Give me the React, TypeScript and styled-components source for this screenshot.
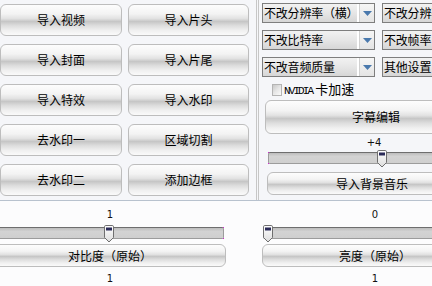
import React from "react";
import styled, { createGlobalStyle } from "styled-components";

const Global = createGlobalStyle`
  html, body { margin: 0; padding: 0; width: 432px; height: 286px; overflow: hidden; background: #fcfcfd; }
  body { font-family: "Noto Sans CJK SC", "Noto Sans", sans-serif; color: #000; }
  * { box-sizing: border-box; }
`;

const Page = styled.div`
  width: 520px;
  height: 286px;
  display: flex;
  flex-direction: column;
`;

const Top = styled.div`
  display: flex;
  height: 204px;
  background: #f5f6f9;
  border-bottom: 1px solid #b8c2ce;
`;

const LeftPanel = styled.div`
  width: 259px;
  border-right: 3px double #c6c6c6;
  display: grid;
  grid-template-columns: 122px 121px;
  grid-auto-rows: 32px;
  column-gap: 6px;
  row-gap: 8px;
  padding-top: 4px;
  align-content: start;
`;

const GlossButton = styled.div<{ $w?: number; $h?: number; $ml?: number; $mt?: number }>`
  ${(p) => (p.$w ? `width: ${p.$w}px;` : "")}
  ${(p) => (p.$h ? `height: ${p.$h}px;` : "")}
  ${(p) => (p.$ml ? `margin-left: ${p.$ml}px;` : "")}
  ${(p) => (p.$mt ? `margin-top: ${p.$mt}px;` : "")}
  flex-shrink: 0;
  display: flex;
  align-items: center;
  justify-content: center;
  border: 1px solid #bdbdbd;
  border-radius: 6px;
  background: linear-gradient(
    to bottom,
    #fdfdfd 0%,
    #f3f3f3 30%,
    #e2e2e2 45%,
    #c6c6c6 55%,
    #dcdcdc 68%,
    #f0f0f0 85%,
    #fafafa 100%
  );
  font-size: 12px;
  line-height: 1;
  color: #000;
  white-space: nowrap;
`;

const RightPanel = styled.div`
  flex: 1;
  display: flex;
  flex-direction: column;
  padding: 3px 0 0 3px;
`;

const SelectGrid = styled.div`
  display: grid;
  grid-template-columns: 113px 113px;
  grid-auto-rows: 20px;
  column-gap: 7px;
  row-gap: 7px;
`;

const Select = styled.div`
  display: flex;
  border: 1px solid #7e7e7e;
  background: #fff;
  overflow: hidden;
`;

const SelectText = styled.div`
  flex: 1;
  font-size: 12px;
  letter-spacing: -0.2px;
  line-height: 18px;
  padding-left: 1px;
  white-space: nowrap;
  overflow: hidden;
  background: linear-gradient(to bottom, #f2f2f2 0%, #e6e6e6 50%, #d6d6d6 100%);
`;

const ArrowBox = styled.div`
  width: 15px;
  margin-left: 2px;
  display: flex;
  align-items: center;
  justify-content: center;
  background: linear-gradient(to bottom, #f6f6f6, #e4e4e4);
  border-left: 1px solid #d0d0d0;
`;

const CheckRow = styled.div`
  display: flex;
  align-items: center;
  gap: 2px;
  margin: 6px 0 0 10px;
  height: 13px;
`;

const CheckBox = styled.div`
  width: 10px;
  height: 12px;
  border: 1px solid #b4b4b4;
  background: linear-gradient(135deg, #c8c8c8 0%, #e6e6e6 50%, #fafafa 100%);
`;

const CheckLabel = styled.div`
  font-size: 13px;
  line-height: 13px;
  white-space: nowrap;
`;

const Latin = styled.span`
  font-family: "Liberation Mono", monospace;
  font-size: 11px;
  font-weight: normal;
  letter-spacing: -1.9px;
  margin-right: 3px;
`;

const ValueLabel = styled.div<{ $w: number; $ml?: number; $mt?: number }>`
  width: ${(p) => p.$w}px;
  margin-left: ${(p) => p.$ml ?? 0}px;
  margin-top: ${(p) => p.$mt ?? 0}px;
  height: 14px;
  line-height: 14px;
  text-align: center;
  font-family: "DejaVu Sans", sans-serif;
  font-size: 10px;
  color: #111;
`;

const SliderBox = styled.div<{ $w: number; $ml?: number; $mt?: number }>`
  position: relative;
  width: ${(p) => p.$w}px;
  margin-left: ${(p) => p.$ml ?? 0}px;
  margin-top: ${(p) => p.$mt ?? 0}px;
  height: 18px;
  flex-shrink: 0;
`;

const Track = styled.div<{ $dot: "left" | "right" | "none" }>`
  position: absolute;
  left: 0;
  right: 0;
  top: 2px;
  height: 12px;
  border: 1px solid #9c9c9c;
  border-top-color: #6e6e6e;
  border-radius: 2px;
  background: linear-gradient(to bottom, #bdbdbd 0%, #d3d3d3 35%, #cfcfcf 100%);
  &::before,
  &::after {
    content: "";
    position: absolute;
    width: 1px;
    height: 1px;
    background: ${(p) => (p.$dot === "none" ? "transparent" : "#d020d0")};
    ${(p) => (p.$dot === "left" ? "left: -1px;" : "right: -1px;")}
  }
  &::before { top: -1px; }
  &::after { bottom: -1px; }
`;

const Thumb = styled.svg`
  position: absolute;
  top: 0;
  width: 10px;
  height: 18px;
`;

const Bottom = styled.div`
  display: flex;
  gap: 36px;
  margin-left: -6px;
  padding-top: 7px;
  background: #fcfcfd;
  flex: 1;
`;

const Column = styled.div<{ $w: number }>`
  width: ${(p) => p.$w}px;
  display: flex;
  flex-direction: column;
`;

const Arrow = () => (
  <svg width="9" height="5" viewBox="0 0 9 5">
    <path d="M0 0 H9 L4.5 5 Z" fill="#4a79ad" />
  </svg>
);

const Slider = ({
  w,
  ratio,
  ml,
  mt,
  dot,
}: {
  w: number;
  ratio: number;
  ml?: number;
  mt?: number;
  dot: "left" | "right" | "none";
}) => (
  <SliderBox $w={w} $ml={ml} $mt={mt}>
    <Track $dot={dot} />
    <Thumb viewBox="0 0 10 18" style={{ left: Math.round(ratio * (w - 10)) }}>
      <defs>
        <linearGradient id="tg" x1="0" x2="0" y1="0" y2="1">
          <stop offset="0" stopColor="#ffffff" />
          <stop offset="1" stopColor="#dcdcdc" />
        </linearGradient>
      </defs>
      <path
        d="M1.8 0.5 H8.2 A1.3 1.3 0 0 1 9.5 1.8 V12.5 L5 17 L0.5 12.5 V1.8 A1.3 1.3 0 0 1 1.8 0.5 Z"
        fill="url(#tg)"
        stroke="#6f6f6f"
      />
      <rect x="2" y="2.5" width="6" height="3" fill="#2a2a58" />
    </Thumb>
  </SliderBox>
);

const leftButtons = [
  "导入视频",
  "导入片头",
  "导入封面",
  "导入片尾",
  "导入特效",
  "导入水印",
  "去水印一",
  "区域切割",
  "去水印二",
  "添加边框",
];

const selects: { label: string; arrow: boolean }[] = [
  { label: "不改分辨率（横）", arrow: true },
  { label: "不改分辨率（竖）", arrow: true },
  { label: "不改比特率", arrow: true },
  { label: "不改帧率", arrow: true },
  { label: "不改音频质量", arrow: true },
  { label: "其他设置", arrow: true },
];

export default function App() {
  return (
    <>
      <Global />
      <Page>
        <Top>
          <LeftPanel>
            {leftButtons.map((t) => (
              <GlossButton key={t}>{t}</GlossButton>
            ))}
          </LeftPanel>
          <RightPanel>
            <SelectGrid>
              {selects.map((s) => (
                <Select key={s.label}>
                  <SelectText>{s.label}</SelectText>
                  {s.arrow && (
                    <ArrowBox>
                      <Arrow />
                    </ArrowBox>
                  )}
                </Select>
              ))}
            </SelectGrid>
            <CheckRow>
              <CheckBox />
              <CheckLabel>
                <Latin>NVIDIA</Latin>卡加速
              </CheckLabel>
            </CheckRow>
            <GlossButton $w={222} $h={34} $ml={3} $mt={4}>
              字幕编辑
            </GlossButton>
            <ValueLabel $w={212} $ml={6} $mt={2}>
              +4
            </ValueLabel>
            <Slider w={212} ml={6} mt={0} ratio={0.54} dot="left" />
            <GlossButton $w={210} $h={23} $ml={5} $mt={4}>
              导入背景音乐
            </GlossButton>
          </RightPanel>
        </Top>
        <Bottom>
          <Column $w={232}>
            <ValueLabel $w={232}>1</ValueLabel>
            <Slider w={230} mt={3} ratio={0.5} dot="right" />
            <GlossButton $w={232} $h={23} $mt={1}>
              对比度（原始）
            </GlossButton>
            <ValueLabel $w={232} $mt={5}>
              1
            </ValueLabel>
          </Column>
          <Column $w={226}>
            <ValueLabel $w={226}>0</ValueLabel>
            <Slider w={226} ml={1} mt={3} ratio={0} dot="none" />
            <GlossButton $w={226} $h={23} $mt={1}>
              亮度（原始）
            </GlossButton>
            <ValueLabel $w={226} $mt={5}>
              1
            </ValueLabel>
          </Column>
        </Bottom>
      </Page>
    </>
  );
}
